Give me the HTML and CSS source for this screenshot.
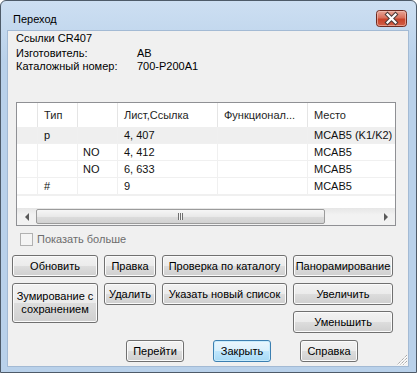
FILE: index.html
```html
<!DOCTYPE html>
<html lang="ru">
<head>
  <meta charset="UTF-8" />
  <title>Переход</title>
  <link rel="stylesheet" href="styles.css">
</head>
<body>
  <div class="window">
    <div class="titlebar">
      <span class="title">Переход</span>
      <span class="close-btn">
        <svg width="31" height="17" viewBox="0 0 31 17">
          <defs>
            <linearGradient id="closeGrad" x1="0" y1="0" x2="0" y2="1">
              <stop offset="0" stop-color="#e9a99b"/>
              <stop offset="0.45" stop-color="#d9705c"/>
              <stop offset="0.55" stop-color="#c8432a"/>
              <stop offset="1" stop-color="#d2614a"/>
            </linearGradient>
          </defs>
          <rect x="0.5" y="0.5" width="30" height="16" rx="3" fill="url(#closeGrad)" stroke="#6e2a20"/>
          <rect x="1.5" y="1.5" width="28" height="14" rx="2" fill="none" stroke="#f3c6bb" stroke-opacity="0.6"/>
          <path d="M11.5 4.5 L19.5 12.5 M19.5 4.5 L11.5 12.5" stroke="#4a3a38" stroke-width="4.2" stroke-linecap="square"/>
          <path d="M11.5 4.5 L19.5 12.5 M19.5 4.5 L11.5 12.5" stroke="#ffffff" stroke-width="2.2" stroke-linecap="square"/>
        </svg>
      </span>
    </div>

    <div class="client">
      <div class="info">
        <div class="info-head">Ссылки CR407</div>
        <div class="info-row"><span class="info-label">Изготовитель:</span><span>AB</span></div>
        <div class="info-row"><span class="info-label">Каталожный номер:</span><span>700-P200A1</span></div>
      </div>

      <div class="list">
        <div class="list-view">
          <table class="grid">
            <colgroup>
              <col style="width: 21px">
              <col style="width: 40px">
              <col style="width: 40px">
              <col style="width: 100px">
              <col style="width: 90px">
              <col style="width: 120px">
            </colgroup>
            <thead>
              <tr>
                <th></th>
                <th>Тип</th>
                <th></th>
                <th>Лист,Ссылка</th>
                <th>Функционал...</th>
                <th class="last">Место</th>
              </tr>
            </thead>
            <tbody>
              <tr class="row-sel">
                <td></td><td>p</td><td></td><td>4, 407</td><td></td><td class="last">MCAB5 (K1/K2)</td>
              </tr>
              <tr>
                <td></td><td></td><td>NO</td><td>4, 412</td><td></td><td class="last">MCAB5</td>
              </tr>
              <tr>
                <td></td><td></td><td>NO</td><td>6, 633</td><td></td><td class="last">MCAB5</td>
              </tr>
              <tr>
                <td></td><td>#</td><td></td><td>9</td><td></td><td class="last">MCAB5</td>
              </tr>
              <tr>
                <td></td><td></td><td></td><td></td><td></td><td class="last"></td>
              </tr>
            </tbody>
          </table>
        </div>
        <div class="hscroll">
          <div class="sb-btn"><span class="arrow-left"></span></div>
          <div class="sb-track">
            <div class="sb-thumb"><span class="grip"></span></div>
          </div>
          <div class="sb-btn"><span class="arrow-right"></span></div>
        </div>
      </div>

      <div class="check">
        <span class="check-box"></span>
        <span class="check-text">Показать больше</span>
      </div>

      <div class="actions">
        <button class="btn">Обновить</button>
        <button class="btn">Правка</button>
        <button class="btn">Проверка по каталогу</button>
        <button class="btn">Панорамирование</button>
        <button class="btn btn-tall">Зумирование с сохранением</button>
        <button class="btn">Удалить</button>
        <button class="btn">Указать новый список</button>
        <button class="btn">Увеличить</button>
        <button class="btn col-last">Уменьшить</button>
      </div>

      <div class="footer">
        <button class="btn">Перейти</button>
        <button class="btn btn-default">Закрыть</button>
        <button class="btn">Справка</button>
      </div>

      <svg class="size-grip" width="12" height="12" viewBox="0 0 12 12">
        <path d="M11 1 L1 11 M11 4 L4 11 M11 7 L7 11 M11 10 L10 11" stroke="#ffffff" stroke-width="1" transform="translate(0.6 0.6)"/>
        <path d="M11 1 L1 11 M11 4 L4 11 M11 7 L7 11" stroke="#8c8c8c" stroke-width="1" stroke-dasharray="1 1"/>
      </svg>
    </div>
  </div>
</body>
</html>
```

FILE: styles.css
```css
body {
  margin: 0;
  background-color: #fff;
  font-family: 'Liberation Sans', Arial, sans-serif;
  font-size: 11px;
  color: #000;
}

.window {
  width: 417px;
  height: 373px;
  box-sizing: border-box;
  border: 1px solid #4e5b69;
  border-radius: 6px 6px 0 0;
  padding: 0 7px 5px 6px;
  background: linear-gradient(#cddff2, #b9d1ea 60px, #b9d1ea);
  box-shadow: 0 1px 0 #35c4d4;
}

.titlebar {
  height: 29px;
  display: flex;
  justify-content: space-between;
  align-items: flex-start;
}

.title {
  padding: 9px 0 0 6px;
  line-height: 18px;
  color: #000;
}

.close-btn {
  display: block;
  width: 31px;
  height: 17px;
  margin: 9px 2px 0 0;
}

.close-btn svg {
  display: block;
}

.client {
  position: relative;
  height: 337px;
  box-sizing: border-box;
  border: 1px solid #a3bad4;
  background-color: #f0f0f0;
}

.info {
  padding: 1px 0 0 8px;
  line-height: 13px;
}

.info-head {
  margin-bottom: 2px;
}

.info-row {
  display: flex;
}

.info-label {
  width: 121px;
}

.list {
  margin: 29px 0 0 8px;
  width: 380px;
  height: 124px;
  box-sizing: border-box;
  border: 1px solid #8f9094;
  background-color: #fff;
  display: flex;
  flex-direction: column;
}

.list-view {
  flex: 1;
  overflow: hidden;
}

.grid {
  border-collapse: separate;
  border-spacing: 0;
  table-layout: fixed;
  width: 411px;
}

.grid th,
.grid td {
  padding: 0 0 0 6px;
  text-align: left;
  font-weight: normal;
  white-space: nowrap;
  overflow: hidden;
}

.grid th {
  line-height: 24px;
  border-right: 1px solid #e5e5e5;
  color: #1e1e1e;
}

.grid td {
  line-height: 16px;
  border-right: 1px solid #f0f0f0;
  border-bottom: 1px solid #f0f0f0;
  color: #111;
}

.grid th.last,
.grid td.last {
  border-right: none;
}

.grid th:nth-child(3),
.grid td:nth-child(3) {
  padding-left: 5px;
}

.row-sel td {
  background-color: #efefef;
}

.hscroll {
  height: 17px;
  display: flex;
  background: linear-gradient(#e6e6e6, #f2f2f2 40%, #f2f2f2);
}

.sb-btn {
  width: 19px;
  display: flex;
  align-items: center;
  justify-content: center;
}

.arrow-left {
  border-right: 4px solid #5a5a5a;
  border-top: 4px solid transparent;
  border-bottom: 4px solid transparent;
}

.arrow-right {
  border-left: 4px solid #5a5a5a;
  border-top: 4px solid transparent;
  border-bottom: 4px solid transparent;
}

.sb-track {
  flex: 1;
  padding: 1px 0;
}

.sb-thumb {
  width: 289px;
  height: 15px;
  box-sizing: border-box;
  border: 1px solid #9b9b9b;
  border-radius: 2px;
  background: linear-gradient(#f6f6f6, #e9e9e9 50%, #dcdcdc 51%, #d2d2d2);
  display: flex;
  align-items: center;
  justify-content: center;
}

.grip {
  width: 5px;
  height: 7px;
  background: repeating-linear-gradient(90deg, #6f6f6f 0, #6f6f6f 1px, #f4f4f4 1px, #f4f4f4 2px);
}

.check {
  display: flex;
  align-items: center;
  margin: 7px 0 0 12px;
  height: 13px;
}

.check-box {
  width: 13px;
  height: 13px;
  box-sizing: border-box;
  border: 1px solid #b1b1b1;
  background-color: #f4f4f4;
}

.check-text {
  margin-left: 4px;
  line-height: 13px;
  color: #6d6d6d;
}

.actions {
  display: grid;
  grid-template-columns: 86px 52px 125px 100px;
  grid-template-rows: 22px 22px 22px;
  column-gap: 6px;
  row-gap: 6px;
  margin: 9px 0 0 4px;
}

.btn {
  font-family: 'Liberation Sans', Arial, sans-serif;
  font-size: 11px;
  color: #000;
  height: 22px;
  padding: 0;
  border: 1px solid #707070;
  border-radius: 3px;
  background: linear-gradient(#f2f2f2, #ebebeb 50%, #dddddd 51%, #cfcfcf);
  box-shadow: inset 0 0 0 1px #fbfbfb;
  line-height: 13px;
}

.btn-tall {
  grid-row: span 2;
  height: 40px;
  align-self: start;
}

.col-last {
  grid-column: 4;
}

.btn-default {
  border-color: #3c7fb1;
  background: linear-gradient(#eaf6fd, #d9f0fc 50%, #bee6fd 51%, #a7d9f5);
  box-shadow: inset 0 0 0 1px #c9ecfc;
}

.footer {
  display: flex;
  gap: 29px;
  margin: 7px 0 0 118px;
}

.footer .btn {
  width: 58px;
}

.size-grip {
  position: absolute;
  right: 0;
  bottom: 0;
}
```
